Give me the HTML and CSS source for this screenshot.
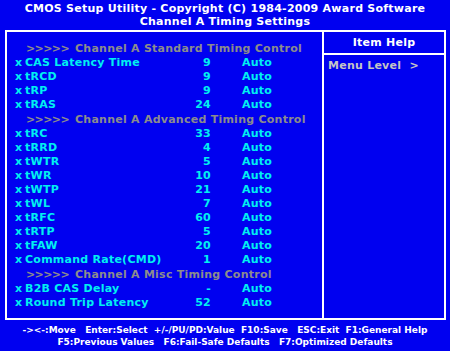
FILE: index.html
```html
<!DOCTYPE html>
<html lang="en">
  <head>
    <meta charset="UTF-8" />
    <title>Channel A Timing Settings</title>
    <link rel="stylesheet" href="styles.css">
  </head>
  <body>
    <header class="title">
      <div>CMOS Setup Utility - Copyright (C) 1984-2009 Award Software</div>
      <div>Channel A Timing Settings</div>
    </header>

    <div class="frame">
      <div class="menu">
        <div class="group"><span class="arrows">&gt;&gt;&gt;&gt;&gt;</span>Channel A Standard Timing Control</div>
        <div class="row"><span>x</span><span>CAS Latency Time</span><span class="val">9</span><span class="opt">Auto</span></div>
        <div class="row"><span>x</span><span>tRCD</span><span class="val">9</span><span class="opt">Auto</span></div>
        <div class="row"><span>x</span><span>tRP</span><span class="val">9</span><span class="opt">Auto</span></div>
        <div class="row"><span>x</span><span>tRAS</span><span class="val">24</span><span class="opt">Auto</span></div>
        <div class="group"><span class="arrows">&gt;&gt;&gt;&gt;&gt;</span>Channel A Advanced Timing Control</div>
        <div class="row"><span>x</span><span>tRC</span><span class="val">33</span><span class="opt">Auto</span></div>
        <div class="row"><span>x</span><span>tRRD</span><span class="val">4</span><span class="opt">Auto</span></div>
        <div class="row"><span>x</span><span>tWTR</span><span class="val">5</span><span class="opt">Auto</span></div>
        <div class="row"><span>x</span><span>tWR</span><span class="val">10</span><span class="opt">Auto</span></div>
        <div class="row"><span>x</span><span>tWTP</span><span class="val">21</span><span class="opt">Auto</span></div>
        <div class="row"><span>x</span><span>tWL</span><span class="val">7</span><span class="opt">Auto</span></div>
        <div class="row"><span>x</span><span>tRFC</span><span class="val">60</span><span class="opt">Auto</span></div>
        <div class="row"><span>x</span><span>tRTP</span><span class="val">5</span><span class="opt">Auto</span></div>
        <div class="row"><span>x</span><span>tFAW</span><span class="val">20</span><span class="opt">Auto</span></div>
        <div class="row"><span>x</span><span>Command Rate(CMD)</span><span class="val">1</span><span class="opt">Auto</span></div>
        <div class="group"><span class="arrows">&gt;&gt;&gt;&gt;&gt;</span>Channel A Misc Timing Control</div>
        <div class="row"><span>x</span><span>B2B CAS Delay</span><span class="val">-</span><span class="opt">Auto</span></div>
        <div class="row"><span>x</span><span>Round Trip Latency</span><span class="val">52</span><span class="opt">Auto</span></div>
      </div>

      <div class="help">
        <div class="help-title">Item Help</div>
        <div class="help-body">Menu Level&nbsp;&nbsp;&gt;</div>
      </div>
    </div>

    <footer class="keys">
      <div>-&gt;&lt;-:Move&nbsp;&nbsp; Enter:Select&nbsp; +/-/PU/PD:Value&nbsp; F10:Save&nbsp;&nbsp; ESC:Exit&nbsp; F1:General Help</div>
      <div>F5:Previous Values&nbsp;&nbsp; F6:Fail-Safe Defaults&nbsp;&nbsp; F7:Optimized Defaults</div>
    </footer>
  </body>
</html>
```

FILE: styles.css
```css
* {
  margin: 0;
  padding: 0;
  box-sizing: border-box;
}

body {
  width: 450px;
  height: 351px;
  background-color: #0000f0;
  color: #fff;
  font-family: "DejaVu Sans", Verdana, sans-serif;
  font-weight: bold;
  font-size: 11px;
  letter-spacing: 0.25px;
  overflow: hidden;
}

.title {
  padding-top: 2px;
  text-align: center;
  line-height: 13px;
  height: 30px;
}

.frame {
  margin-left: 5px;
  width: 441px;
  height: 290px;
  border: 2px solid #fff;
  display: grid;
  grid-template-columns: 315px 120px;
  column-gap: 2px;
  background-color: #fff;
}

.menu {
  background-color: #0000f0;
  padding-top: 9px;
  line-height: 14px;
}

.row {
  display: grid;
  grid-template-columns: 10px 146px 40px 1fr;
  padding-left: 8px;
  color: #00f0f0;
}

.val {
  text-align: right;
}

.opt {
  padding-left: 31px;
}

.group {
  padding: 1px 0 0 19px;
  color: #8c8c8c;
  white-space: nowrap;
}

.arrows {
  display: inline-block;
  width: 49px;
  letter-spacing: -0.6px;
}

.help {
  display: grid;
  grid-template-rows: 21px 1fr;
  row-gap: 2px;
}

.help-title {
  background-color: #0000f0;
  text-align: center;
  line-height: 21px;
}

.help-body {
  background-color: #0000f0;
  color: #c4c4c4;
  padding: 4px 0 0 4px;
  line-height: 14px;
}

.keys {
  padding-top: 4px;
  text-align: center;
  font-size: 9px;
  letter-spacing: 0;
  line-height: 12px;
  white-space: nowrap;
}
```
